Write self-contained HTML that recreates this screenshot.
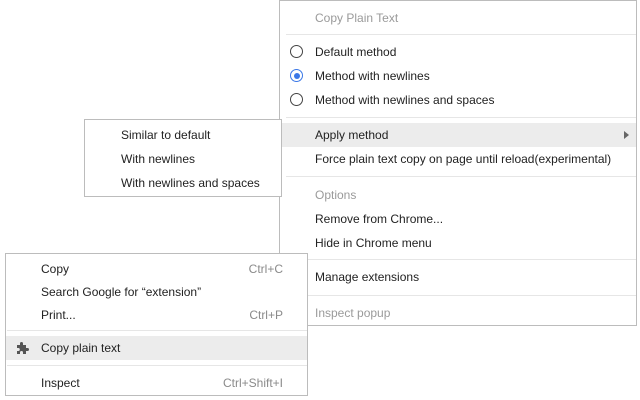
<html><head><style>
body{margin:0;width:640px;height:400px;background:#fff;position:relative;overflow:hidden;font-family:"Liberation Sans",sans-serif;font-size:12px;color:#222}
.m{position:absolute;background:#fff;border:1px solid #bcbcbc;box-sizing:border-box}
.t{position:absolute;white-space:nowrap;line-height:14px}
.g{color:#9a9a9a}
.sep{position:absolute;height:1px;background:#e6e6e6}
.hl{position:absolute;background:#ececec}
.r{position:absolute;width:13px;height:13px;border:1.4px solid #444;border-radius:50%;box-sizing:border-box}
.sc{position:absolute;color:#8a8a8a;text-align:right;white-space:nowrap;line-height:14px}
</style></head><body>
<div class="m" style="left:279px;top:0;width:358px;height:326px">
<div class="t g" style="left:35px;top:10px">Copy Plain Text</div>
<div class="sep" style="left:6px;top:33px;width:350px"></div>
<div class="r" style="left:10px;top:44px"></div><div class="t" style="left:35px;top:44px">Default method</div>
<div class="r" style="left:10px;top:68px;border-color:#3b78e7"></div><div style="position:absolute;left:13.5px;top:71.5px;width:6px;height:6px;border-radius:50%;background:#3b78e7"></div><div class="t" style="left:35px;top:68px">Method with newlines</div>
<div class="r" style="left:10px;top:92px"></div><div class="t" style="left:35px;top:92px">Method with newlines and spaces</div>
<div class="sep" style="left:6px;top:116px;width:350px"></div>
<div class="hl" style="left:0;top:122px;width:356px;height:24px"></div>
<div class="t" style="left:35px;top:127px">Apply method</div>
<div style="position:absolute;left:344px;top:130px;width:0;height:0;border-left:5px solid #666;border-top:4px solid transparent;border-bottom:4px solid transparent"></div>
<div class="t" style="left:35px;top:151px">Force plain text copy on page until reload(experimental)</div>
<div class="sep" style="left:6px;top:175px;width:350px"></div>
<div class="t g" style="left:35px;top:187px">Options</div>
<div class="t" style="left:35px;top:211px">Remove from Chrome...</div>
<div class="t" style="left:35px;top:235px">Hide in Chrome menu</div>
<div class="sep" style="left:6px;top:258px;width:350px"></div>
<div class="t" style="left:35px;top:269px">Manage extensions</div>
<div class="sep" style="left:6px;top:294px;width:350px"></div>
<div class="t g" style="left:35px;top:305px">Inspect popup</div>
</div>
<div class="m" style="left:84px;top:119px;width:198px;height:78px">
<div class="t" style="left:36px;top:8px">Similar to default</div>
<div class="t" style="left:36px;top:32px">With newlines</div>
<div class="t" style="left:36px;top:56px">With newlines and spaces</div>
</div>
<div class="m" style="left:5px;top:253px;width:303px;height:143px">
<div class="t" style="left:35px;top:8px">Copy</div><div class="sc" style="right:24px;top:8px">Ctrl+C</div>
<div class="t" style="left:35px;top:31px">Search Google for “extension”</div>
<div class="t" style="left:35px;top:54px">Print...</div><div class="sc" style="right:24px;top:54px">Ctrl+P</div>
<div class="sep" style="left:1px;top:76px;width:300px"></div>
<div class="hl" style="left:0;top:82px;width:301px;height:24px"></div>
<svg style="position:absolute;left:10px;top:87px" width="14" height="14" viewBox="0 0 14 14"><path d="M1 4h3V2.5a1.5 1.5 0 0 1 3 0V4h3v3h1.5a1.5 1.5 0 0 1 0 3H10v3H7v-1.5a1.5 1.5 0 0 0-3 0V13H1V10h1.3a1.5 1.5 0 0 0 0-3H1z" fill="#555"/></svg>
<div class="t" style="left:35px;top:87px">Copy plain text</div>
<div class="sep" style="left:1px;top:111px;width:300px"></div>
<div class="t" style="left:35px;top:122px">Inspect</div><div class="sc" style="right:24px;top:122px">Ctrl+Shift+I</div>
</div>
</body></html>
